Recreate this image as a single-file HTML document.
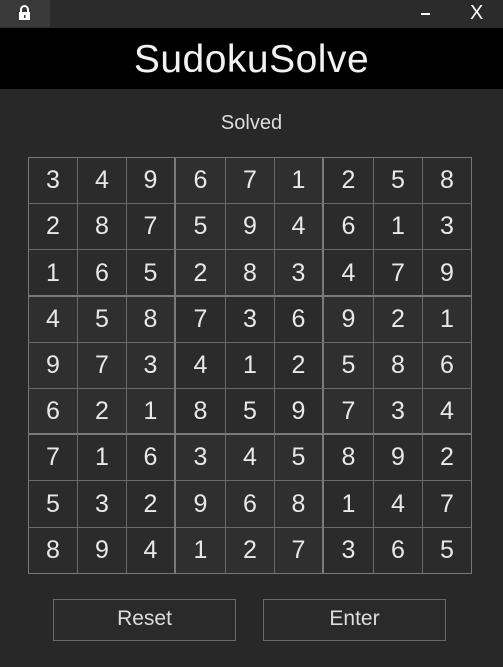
<!DOCTYPE html>
<html><head><style>
*{margin:0;padding:0;box-sizing:border-box}
body{width:503px;height:667px;background:#282828;font-family:"Liberation Sans",sans-serif;color:#eee;position:relative;overflow:hidden}
.tb{position:absolute;left:0;top:0;width:503px;height:28px;background:#2b2b2b}
.lock{position:absolute;left:0;top:0;width:50px;height:27px;background:#393939}
.hdr{position:absolute;left:0;top:28px;width:503px;height:61px;background:#000;text-align:center;font-size:39px;line-height:63px;color:#f2f2f2;letter-spacing:0.5px}
.st{position:absolute;left:0;top:112px;width:503px;text-align:center;font-size:20px;color:#ddd}
.grid{position:absolute;left:28px;top:157px;width:444px;height:417px;border-left:1px solid #777;border-top:1px solid #777}
.c{position:absolute;border-right:1px solid #6a6a6a;border-bottom:1px solid #6a6a6a;text-align:center;font-size:25px;color:#e8e8e8;background:#2e2e2e}
.btn{position:absolute;top:599px;width:183px;height:42px;border:1px solid #6a6a6a;background:#2a2a2a;text-align:center;line-height:38px;font-size:21px;color:#ddd}
</style></head><body>
<div class="tb"></div>
<div class="lock"><svg width="50" height="27"><rect x="19" y="12" width="11" height="8" fill="#fff"/><path d="M21 12V9.5a3.5 3.5 0 0 1 7 0V12" stroke="#fff" stroke-width="2" fill="none"/><rect x="24" y="15" width="1.5" height="3" fill="#393939"/></svg></div>
<div style="position:absolute;left:421px;top:13px;width:9px;height:2px;background:#fff"></div>
<div style="position:absolute;left:470px;top:2px;font-size:20px;color:#fff">X</div>
<div class="hdr">SudokuSolve</div>
<div class="st">Solved</div>
<div class="grid" id="g"></div>
<div class="btn" style="left:53px">Reset</div>
<div class="btn" style="left:263px">Enter</div>
<script>
var s="349671258287594613165283479458736921973412586621859734716345892532968147894127365";
var xs=[0,49,98,147,197,246,295,345,394,443],ys=[0,46,92,139,185,231,277,323,370,416];
var g=document.getElementById('g'),h='';
for(var r=0;r<9;r++)for(var c=0;c<9;c++){
var w=xs[c+1]-xs[c],ht=ys[r+1]-ys[r];
var bg=((Math.floor(r/3)+Math.floor(c/3))%2)?'#2f2f2f':'#2b2b2b';
var br=(c==2||c==5)?'border-right:2px solid #7a7a7a;':'';
var bb=(r==2||r==5)?'border-bottom:2px solid #7a7a7a;':'';
if(c==8)br='border-right:1px solid #777;';if(r==8)bb='border-bottom:1px solid #777;';
h+='<div class="c" style="left:'+xs[c]+'px;top:'+ys[r]+'px;width:'+w+'px;height:'+ht+'px;line-height:'+(ht-1)+'px;background:'+bg+';'+br+bb+'">'+s[r*9+c]+'</div>';}
g.innerHTML=h;
</script>
</body></html>
